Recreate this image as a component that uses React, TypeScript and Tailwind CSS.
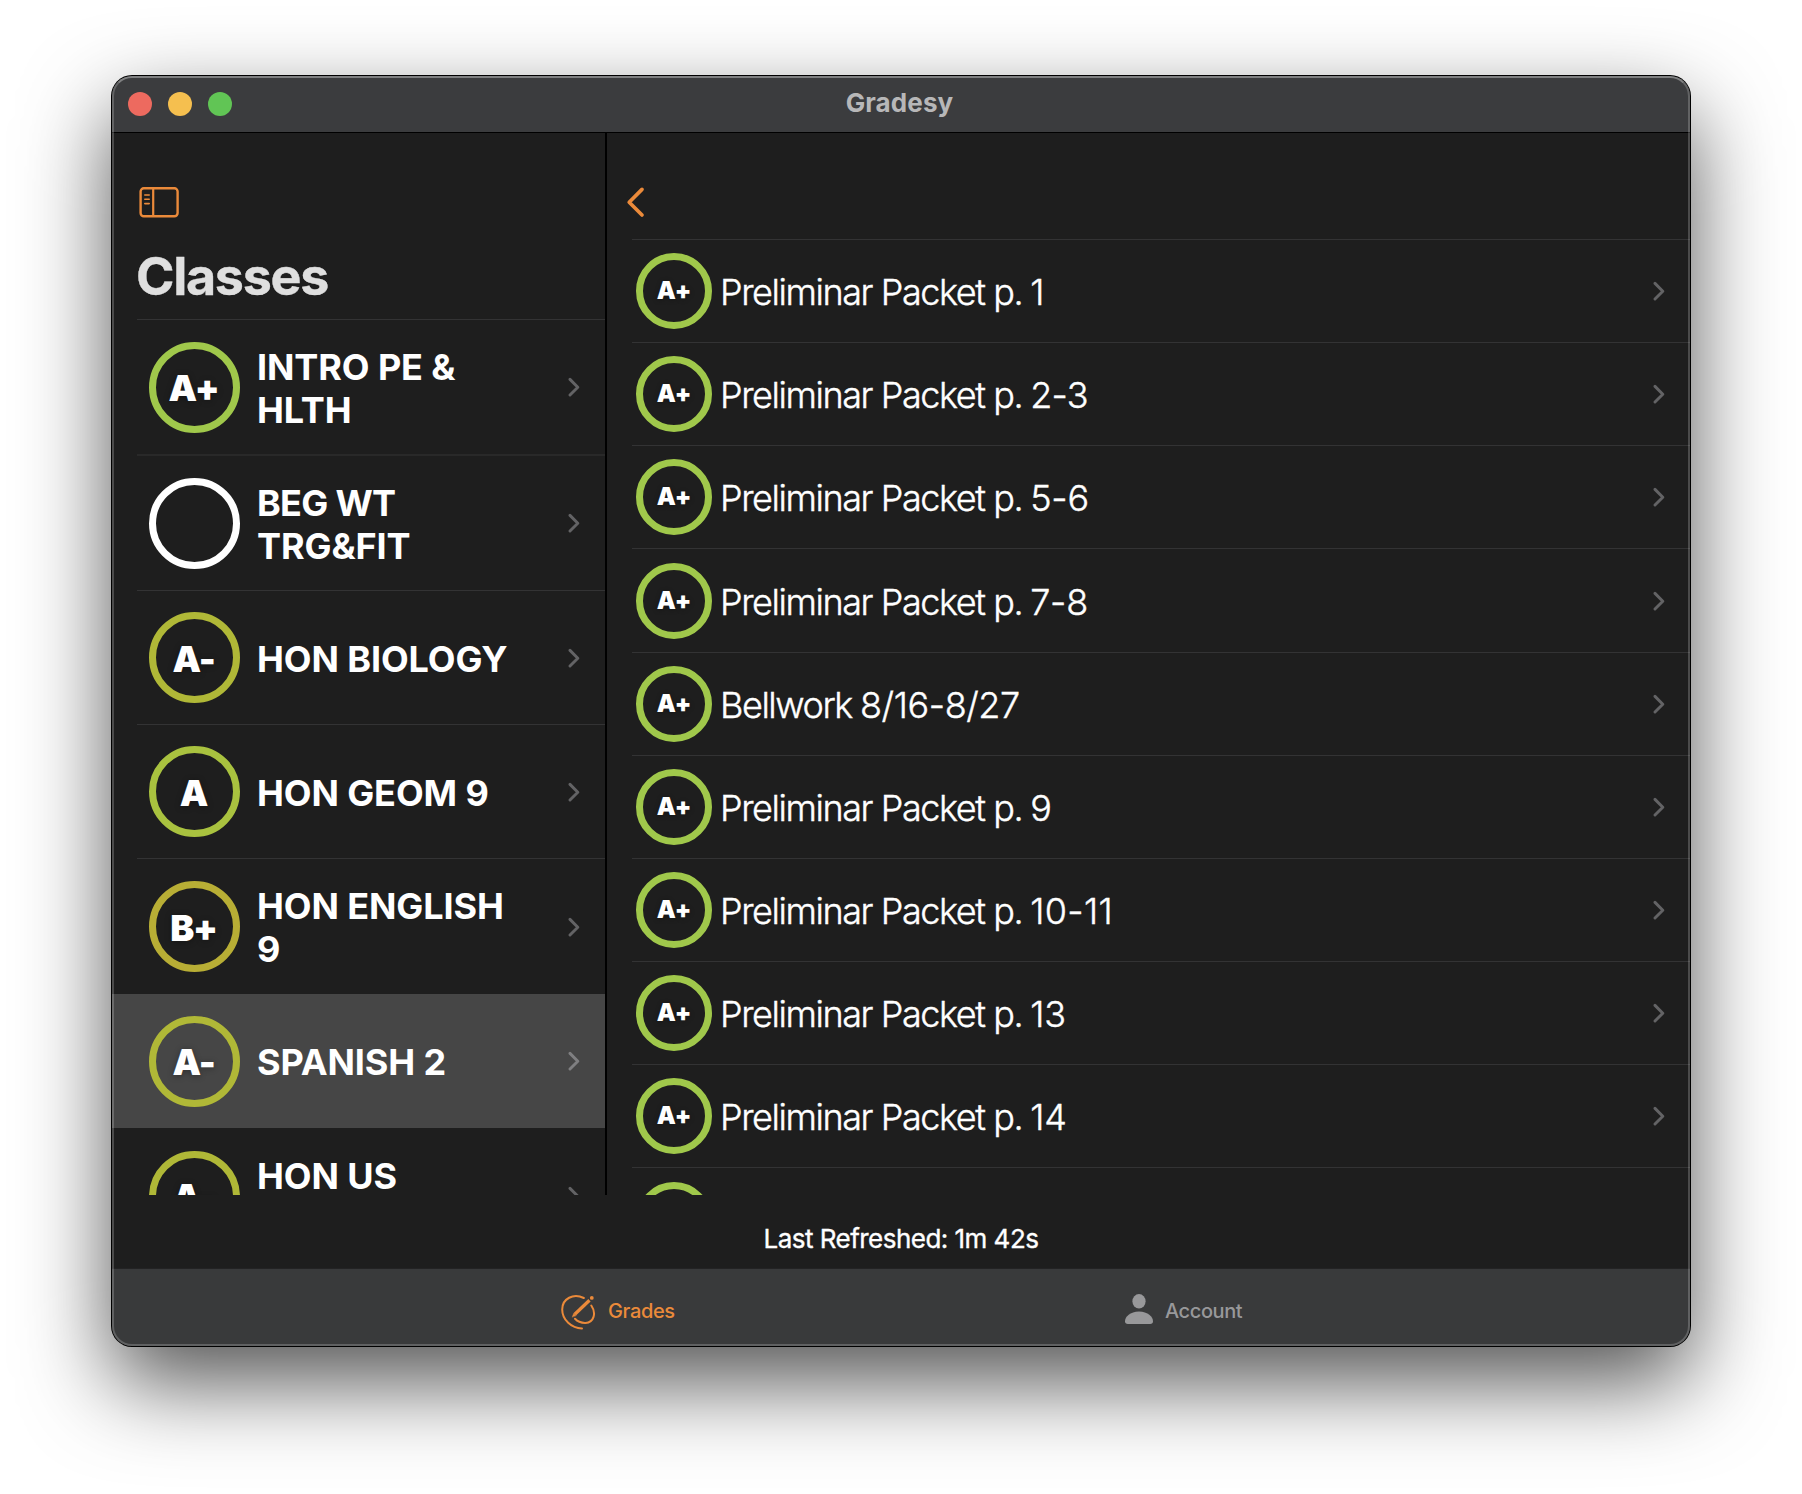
import React from "react";

type Klass = {
  grade: string;
  lines: string[];
  ring: string;
  height: string;
  line: string;
  selected?: boolean;
};

const CLASSES: Klass[] = [
  { grade: "A+", lines: ["INTRO PE &", "HLTH"], ring: "border-[#a0c84b]", height: "h-[135px]", line: "border-t border-[#333334]" },
  { grade: "", lines: ["BEG WT", "TRG&FIT"], ring: "border-white", height: "h-[136px]", line: "border-t-2 border-[#292929]" },
  { grade: "A-", lines: ["HON BIOLOGY"], ring: "border-[#b0b837]", height: "h-[134px]", line: "border-t border-[#333334]" },
  { grade: "A", lines: ["HON GEOM 9"], ring: "border-[#a9c23f]", height: "h-[134px]", line: "border-t border-[#333334]" },
  { grade: "B+", lines: ["HON ENGLISH", "9"], ring: "border-[#b8ae35]", height: "h-[136px]", line: "border-t border-[#333334]" },
  { grade: "A-", lines: ["SPANISH 2"], ring: "border-[#b0b837]", height: "h-[134px]", line: "", selected: true },
  { grade: "A-", lines: ["HON US", ""], ring: "border-[#b0b837]", height: "h-[136px]", line: "" },
];

type Assignment = { title: string; pages: string; track: string };

const ASSIGNMENTS: Assignment[] = [
  { title: "Preliminar Packet p.", pages: "1", track: "" },
  { title: "Preliminar Packet p.", pages: "2-3", track: "tracking-[-0.7px]" },
  { title: "Preliminar Packet p.", pages: "5-6", track: "tracking-[-0.2px]" },
  { title: "Preliminar Packet p.", pages: "7-8", track: "tracking-[-0.2px]" },
  { title: "Bellwork", pages: "8/16-8/27", track: "tracking-[-0.4px]" },
  { title: "Preliminar Packet p.", pages: "9", track: "" },
  { title: "Preliminar Packet p.", pages: "10-11", track: "tracking-[0.4px]" },
  { title: "Preliminar Packet p.", pages: "13", track: "tracking-[0px]" },
  { title: "Preliminar Packet p.", pages: "14", track: "tracking-[0px]" },
];

function Chevron({ bright = false }: { bright?: boolean }) {
  return (
    <svg className={`h-5 w-3 shrink-0 ${bright ? "text-[#7f7f81]" : "text-[#636365]"}`} viewBox="0 0 12 20" fill="none" stroke="currentColor" strokeWidth="2.9" strokeLinecap="round" strokeLinejoin="round">
      <path d="M2 2.4 L9.8 10.2 L2 18" />
    </svg>
  );
}

function ClassRow({ item }: { item: Klass }) {
  return (
    <div className={`${item.height} shrink-0 ${item.selected ? "bg-[#464646]" : ""}`}>
      <div className={`ml-[25px] flex h-full items-center pr-[25px] pl-3 ${item.line}`}>
        <div className={`flex size-[91px] shrink-0 items-center justify-center rounded-full border-[7px] ${item.ring}`}>
          <span className="mt-[2px] mr-[2px] text-[36px] leading-none font-black tracking-[-1.2px] text-white [text-shadow:0_1px_6px_rgba(0,0,0,0.35)]">{item.grade}</span>
        </div>
        <div className="mt-[3px] ml-[17px] grow text-[36px] leading-[43px] font-bold tracking-[-0.1px] whitespace-nowrap text-white">
          {item.lines.map((l, i) => (
            <div key={i} className={`h-[43px] ${l === "BEG WT" ? "tracking-[-0.7px]" : ""}`}>{l}</div>
          ))}
        </div>
        <Chevron bright={item.selected} />
      </div>
    </div>
  );
}

function GradeRing({ grade }: { grade: string }) {
  return (
    <div className="flex size-[76px] shrink-0 items-center justify-center rounded-full border-[7px] border-[#a0c84b]">
      <span className="text-[24px] leading-none font-black tracking-[-0.3px] text-white [text-shadow:0_1px_5px_rgba(0,0,0,0.35)]">{grade}</span>
    </div>
  );
}

function AssignmentRow({ item }: { item: Assignment }) {
  return (
    <div className="ml-[25px] flex h-[103.17px] shrink-0 items-center border-t border-[#333334] pr-[25px] pl-1">
      <GradeRing grade="A+" />
      <div className="mt-[3px] ml-2 flex grow gap-[8px] text-[36px] leading-[43px] font-light whitespace-nowrap text-white [-webkit-text-stroke:0.4px_white]">
        <span className="tracking-[-1.43px]">{item.title}</span>
        <span className={item.track}>{item.pages}</span>
      </div>
      <Chevron />
    </div>
  );
}

export default function App() {
  return (
    <div className="h-[1494px] w-[1802px] overflow-hidden bg-white px-[112px] pt-[76px] font-['Inter',sans-serif]">
      <div className="relative flex h-[1270px] w-[1578px] flex-col rounded-[20px] bg-[#1e1e1e] shadow-[0_0_0_1px_#000,0_36px_88px_rgba(0,0,0,0.68)]">
        <header className="grid h-[57px] shrink-0 grid-cols-[1fr_auto_1fr] items-center rounded-t-[20px] border-b border-black bg-[#3b3c3e] px-4">
          <div className="flex gap-4">
            <span className="size-6 rounded-full bg-[#ed6a5f]" />
            <span className="size-6 rounded-full bg-[#f5bf4f]" />
            <span className="size-6 rounded-full bg-[#61c555]" />
          </div>
          <h1 className="mr-[3px] mb-[2px] text-[26px] leading-none font-bold tracking-[0.1px] text-[#b7b7b8]">Gradesy</h1>
          <span />
        </header>

        <main className="flex h-[1062px] shrink-0 overflow-hidden">
          <aside className="flex w-[495px] shrink-0 flex-col border-r-2 border-black">
            <div className="h-[186px] shrink-0 pt-[53px] pl-[26px]">
              <svg className="h-8 w-[42px]" viewBox="0 0 42 32" fill="none" stroke="#eb8a3a">
                <rect x="2.6" y="2.3" width="37" height="28" rx="3.2" strokeWidth="2.4" />
                <path d="M15.2 2.3 V30.3" strokeWidth="2.2" />
                <path d="M6.8 9 H11.2 M6.8 13.3 H11.2 M6.8 17.6 H11.2" strokeWidth="1.6" strokeLinecap="round" />
              </svg>
              <h2 className="mt-[28px] -ml-[2px] text-[52px] leading-[62px] font-bold tracking-[-1.3px] text-[#dfdfdf] [-webkit-text-stroke:0.4px_#dfdfdf]">Classes</h2>
            </div>
            {CLASSES.map((c, i) => (
              <ClassRow key={i} item={c} />
            ))}
          </aside>
          <section className="flex grow flex-col">
            <div className="h-[106px] shrink-0 pt-[52px] pl-[18px]">
              <svg className="h-[34px] w-5" viewBox="0 0 20 34" fill="none" stroke="#eb8a3a" strokeWidth="3.7" strokeLinecap="round" strokeLinejoin="round">
                <path d="M17 4.4 L4.2 17.2 L17 30" />
              </svg>
            </div>
            {ASSIGNMENTS.map((a, i) => (
              <AssignmentRow key={i} item={a} />
            ))}
            <div className="ml-[25px] h-[103px] shrink-0 border-t border-[#333334] pt-[14px] pl-1">
              <GradeRing grade="" />
            </div>
          </section>
        </main>

        <div className="flex h-[73px] shrink-0 justify-center pt-[28px] text-[26px] leading-[32px] text-white">
          <p className="tracking-[-0.53px] [-webkit-text-stroke:0.35px_white]">Last Refreshed: 1m 42s</p>
        </div>

        <footer className="grid grow grid-cols-2 rounded-b-[20px] border-t border-[#232324] bg-[#393a3b]">
          <div className="flex items-center pl-[448px]">
            <svg className="mt-2 h-9 w-9" viewBox="0 0 36 36" fill="none" stroke="#eb8a3a" strokeWidth="2" strokeLinecap="round">
              <path d="M23.8 4 C13.5 -1 2.200 4.500 2.200 15.500 C2.200 26 11.500 34 22 34.500" />
              <path d="M31.300 11.500 C36.500 19 34 28.500 25.500 28.900 C21.500 29 17.500 27.500 15 24.800" />
              <path d="M14.800 20.300 L29.500 6.300" strokeWidth="3.3" strokeLinecap="butt" />
              <path d="M12.300 22.800 L13.800 19.300 L15.900 21.400 Z" fill="#eb8a3a" strokeWidth="0.5" />
              <circle cx="31.800" cy="3.900" r="1.900" fill="#eb8a3a" stroke="none" />
            </svg>
            <span className="mt-[6px] ml-3 text-[20px] font-medium tracking-[-0.35px] text-[#eb8a3a]">Grades</span>
          </div>
          <div className="flex items-center pl-[224px]">
            <svg className="mt-[3px] h-[30px] w-[28px]" viewBox="0 0 28 30" fill="#98989a">
              <ellipse cx="14" cy="7.300" rx="6.600" ry="7.300" />
              <path d="M2.800 30 C1 30 0 29 0 27.300 C0 23 5.200 17.600 14 17.600 C22.800 17.600 28 23 28 27.300 C28 29 27 30 25.200 30 Z" />
            </svg>
            <span className="mt-[6px] ml-3 text-[20px] font-medium tracking-[-0.4px] text-[#98989a]">Account</span>
          </div>
        </footer>

        <div className="pointer-events-none absolute inset-0 rounded-[20px] border-2 border-white/20 border-t-white/35" />
      </div>
    </div>
  );
}
